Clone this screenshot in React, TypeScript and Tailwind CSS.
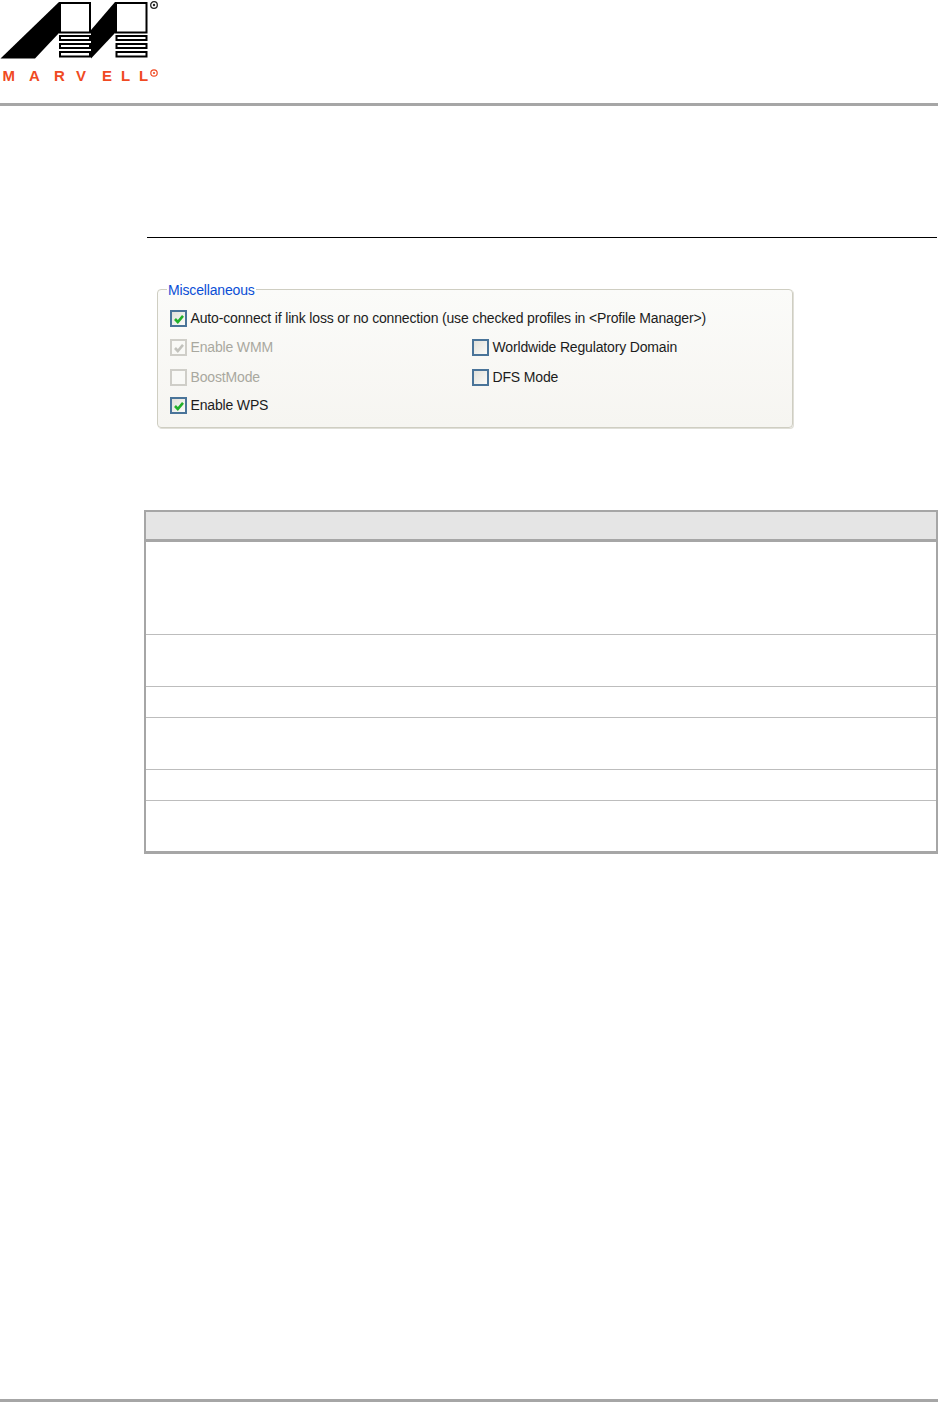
const font = "font-['Liberation_Sans',Arial,sans-serif]";

const ORANGE = "#f04a23";
const letters: [string, number][] = [
  ["M", 2.5],
  ["A", 29],
  ["R", 54],
  ["V", 76],
  ["E", 102],
  ["L", 121],
  ["L", 139],
];

function Logo() {
  return (
    <svg width="162" height="84" viewBox="0 0 162 84" className="block" aria-label="Marvell logo">
      <path d="M0.500 58.500 L59 2 V33 L35 58.500 Z" fill="#000" />
      <path d="M91 30 L115 2 V33 L91 58.500 Z" fill="#000" />
      <g fill="#fff" stroke="#000" strokeWidth="2">
        <rect x="60" y="3" width="30" height="29.500" />
        <rect x="116" y="3" width="30.500" height="29.500" />
        <rect x="60" y="36" width="30" height="4" />
        <rect x="60" y="44" width="30" height="4" />
        <rect x="60" y="52" width="30" height="4.500" />
        <rect x="116.500" y="36" width="30" height="4" />
        <rect x="116.500" y="44" width="30" height="4" />
        <rect x="116.500" y="52" width="30" height="4.500" />
      </g>
      <circle cx="154" cy="5" r="3.300" fill="none" stroke="#222" strokeWidth="1.300" />
      <circle cx="154" cy="5" r="1.200" fill="#222" />
      {letters.map(([l, x], i) => (
        <text key={i} x={x} y="81" fill={ORANGE} fontFamily="Liberation Sans" fontWeight="700" fontSize="15">
          {l}
        </text>
      ))}
      <circle cx="154" cy="73" r="3.200" fill="none" stroke={ORANGE} strokeWidth="1.200" />
      <circle cx="154" cy="73" r="1.100" fill={ORANGE} />
    </svg>
  );
}

function Check({ checked, disabled, label, cls }: { checked?: boolean; disabled?: boolean; label: string; cls?: string }) {
  return (
    <div className={`flex items-center gap-[3.500px] h-[17px] ${cls ?? ""}`}>
      <span
        className={`flex h-[17px] w-[17px] shrink-0 items-center justify-center border-2 ${
          disabled
            ? "border-[#cfcec8] bg-[#f9f9f6]"
            : "border-[#4a7499] bg-gradient-to-br from-[#e2e1da] to-[#fbfbf9]"
        }`}
      >
        {checked && (
          <svg width="12" height="12" viewBox="0 0 12 12">
            <path
              d="M2 6 L4.800 9 L10 2.800"
              fill="none"
              stroke={disabled ? "#c2c2bc" : "#22b02a"}
              strokeWidth="2.600"
            />
          </svg>
        )}
      </span>
      <span
        className={`whitespace-nowrap text-[14px] leading-[17px] tracking-[-0.16px] ${
          disabled ? "text-[#a9a89f]" : "text-[#1c1c1c]"
        }`}
      >
        {label}
      </span>
    </div>
  );
}

const rows = ["h-[93px]", "h-[52px]", "h-[31px]", "h-[52px]", "h-[31px]"];

export default function App() {
  return (
    <div className={`flex h-[1402px] w-[938px] flex-col bg-white ${font}`}>
      <header className="h-[103px] shrink-0">
        <Logo />
      </header>
      <div className="h-[3px] shrink-0 bg-[#a6a6a6]" />

      <main className="flex flex-1 flex-col pl-[145px]">
        <div className="ml-[2px] mt-[131px] h-px w-[790px] bg-black" />

        <fieldset className="ml-[12px] mt-[42px] h-[148px] w-[636px] rounded-[4px] border border-[#cfcec2] bg-gradient-to-b from-[#fbfbf9] to-[#f6f5f1] pl-[12px] shadow-[1px_1px_0_#e0dfd8]">
          <legend className="ml-[-3px] px-[1px] pt-[2px] text-[14px] leading-[16px] tracking-[-0.16px] text-[#0a4ed6]">
            Miscellaneous
          </legend>
          <Check checked label="Auto-connect if link loss or no connection (use checked profiles in <Profile Manager>)" cls="mt-[12px]" />
          <div className="mt-[12px] grid grid-cols-[302px_1fr] gap-y-[13px]">
            <Check checked disabled label="Enable WMM" />
            <Check label="Worldwide Regulatory Domain" />
            <Check disabled label="BoostMode" />
            <Check label="DFS Mode" />
            <Check checked label="Enable WPS" cls="mt-[-2px]" />
          </div>
        </fieldset>

        <section className="ml-[-1px] mt-[82px] w-[794px] border-x-2 border-t-2 border-b-[3px] border-[#a6a6a6]">
          <div className="h-[27px] bg-[#e5e5e5]" />
          <div className="h-[3px] bg-[#a6a6a6]" />
          {rows.map((h, i) => (
            <div key={i} className={`${h} border-b border-[#bdbdbd]`} />
          ))}
          <div className="h-[50px]" />
        </section>

        <div className="flex-1" />
      </main>

      <div className="h-[3px] shrink-0 bg-[#a6a6a6]" />
    </div>
  );
}
